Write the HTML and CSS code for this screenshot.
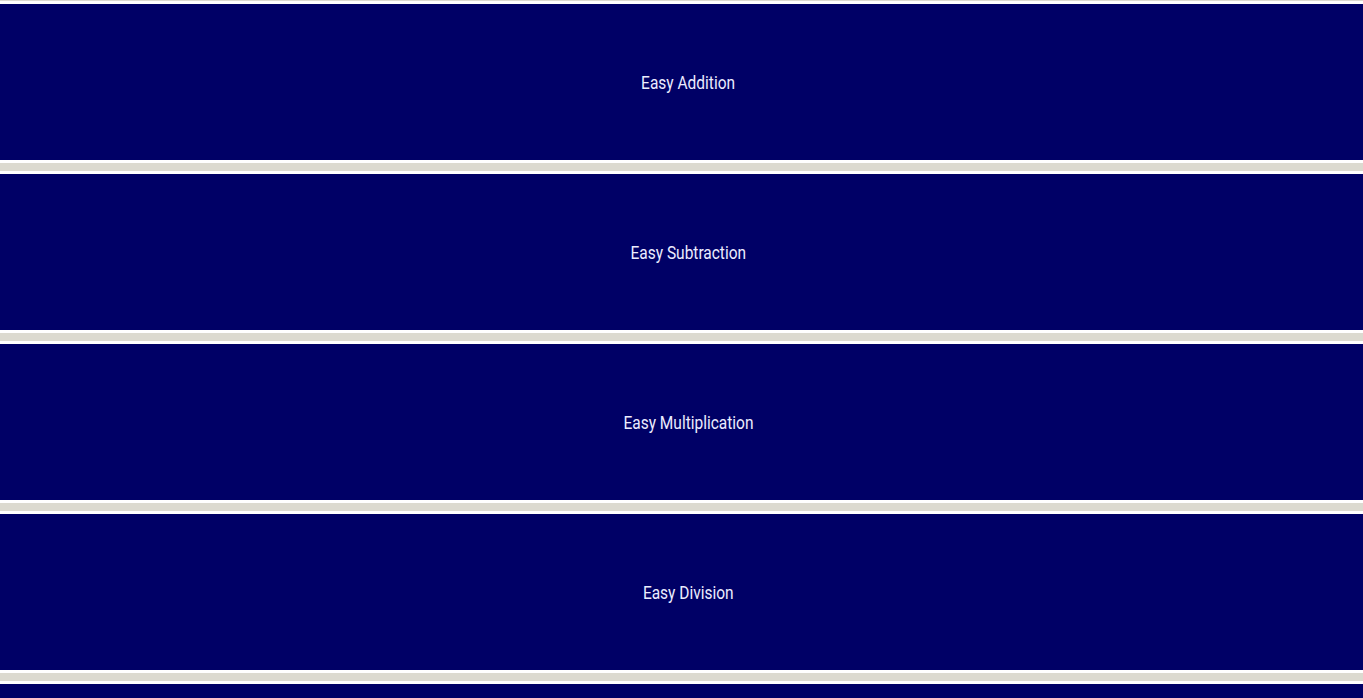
FILE: index.html
```html
<!DOCTYPE html>
<html lang="en">
<head>
<meta charset="utf-8">
<title>Easy Math</title>
<link rel="stylesheet" href="styles.css">
</head>
<body>
<div class="menu">
  <a class="item" href="#"><span class="label">Easy Addition</span></a>
  <a class="item" href="#"><span class="label">Easy Subtraction</span></a>
  <a class="item" href="#"><span class="label">Easy Multiplication</span></a>
  <a class="item" href="#"><span class="label">Easy Division</span></a>
  <a class="item" href="#"></a>
</div>
</body>
</html>
```
FILE: styles.css
```css
html, body {
  margin: 0;
  padding: 0;
}
body {
  background: #dcdad0;
  padding-top: 1px;
  font-family: Roboto, "Liberation Sans", sans-serif;
}
.menu {
  display: flex;
  flex-direction: column;
  gap: 8px;
}
.item {
  display: flex;
  align-items: center;
  justify-content: center;
  height: 154px;
  padding-left: 13px;
  padding-top: 2px;
  box-sizing: content-box;
  background: #000066;
  border-top: 3px solid #ffffff;
  border-bottom: 3px solid #ffffff;
  text-decoration: none;
  color: #ececff;
}
.label {
  display: inline-block;
  font-size: 17.5px;
  transform: scaleX(0.885);
}
```
